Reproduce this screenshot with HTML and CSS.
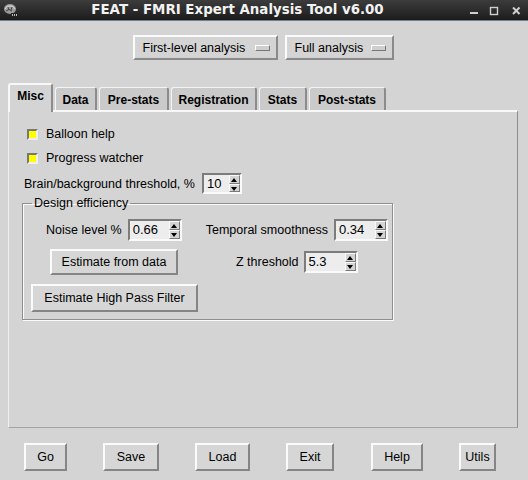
FILE: index.html
```html
<!DOCTYPE html>
<html>
<head>
<meta charset="utf-8">
<link rel="stylesheet" href="styles.css">
</head>
<body>
<div class="window">
  <div class="titlebar">
    <div class="appicon">
      <svg width="14" height="14" viewBox="0 0 14 14">
        <ellipse cx="7" cy="6" rx="6" ry="5" fill="#9a9a9a"/>
        <path d="M2 6 Q4 2 7 3 Q10 2 12 6" fill="none" stroke="#e0e0e0" stroke-width="1"/>
        <path d="M3 8 Q6 5 9 8 M5 4 L6 7 M9 4 L8 7" fill="none" stroke="#444" stroke-width="1"/>
        <rect x="8" y="10" width="6" height="4" fill="#222"/>
        <rect x="9" y="11" width="1" height="2" fill="#bbb"/>
        <rect x="11" y="11" width="1" height="2" fill="#bbb"/>
        <rect x="13" y="11" width="1" height="2" fill="#bbb"/>
      </svg>
    </div>
    <div class="title">FEAT - FMRI Expert Analysis Tool v6.00</div>
    <div class="wctl">
      <svg width="58" height="20" viewBox="0 0 58 20">
        <rect x="2" y="12" width="8" height="2" fill="#cfcfcf"/>
        <rect x="22.5" y="7.5" width="7" height="7" fill="none" stroke="#cfcfcf" stroke-width="1.4"/>
        <path d="M45 7.5 L51.5 14 M51.5 7.5 L45 14" stroke="#cfcfcf" stroke-width="2"/>
      </svg>
    </div>
  </div>
  <div class="content">
    <div class="modes">
      <div class="menubtn mb-first"><span>First-level analysis</span><i class="ind"></i></div>
      <div class="menubtn mb-full"><span>Full analysis</span><i class="ind"></i></div>
    </div>
    <div class="tabs">
      <div class="tab sel t-misc">Misc</div>
      <div class="tab t-data">Data</div>
      <div class="tab t-pre">Pre-stats</div>
      <div class="tab t-reg">Registration</div>
      <div class="tab t-stats">Stats</div>
      <div class="tab t-post">Post-stats</div>
    </div>
    <div class="pane">
      <div class="chkrow r1"><span class="chk"></span><span>Balloon help</span></div>
      <div class="chkrow r2"><span class="chk"></span><span>Progress watcher</span></div>
      <div class="thrrow">
        <span>Brain/background threshold, %</span>
        <div class="spin sp-small"><span class="val">10</span><span class="arrows"><i class="up"></i><i class="dn"></i></span></div>
      </div>
      <fieldset class="design">
        <legend>Design efficiency</legend>
        <div class="drow d1">
          <span>Noise level %</span>
          <div class="spin"><span class="val">0.66</span><span class="arrows"><i class="up"></i><i class="dn"></i></span></div>
          <span class="tlabel">Temporal smoothness</span>
          <div class="spin"><span class="val">0.34</span><span class="arrows"><i class="up"></i><i class="dn"></i></span></div>
        </div>
        <div class="drow d2">
          <div class="btn b-est">Estimate from data</div>
          <span class="zlabel">Z threshold</span>
          <div class="spin"><span class="val">5.3</span><span class="arrows"><i class="up"></i><i class="dn"></i></span></div>
        </div>
        <div class="drow d3">
          <div class="btn b-hpf">Estimate High Pass Filter</div>
        </div>
      </fieldset>
    </div>
    <div class="actions">
      <div class="btn ab a-go">Go</div>
      <div class="btn ab a-save">Save</div>
      <div class="btn ab a-load">Load</div>
      <div class="btn ab a-exit">Exit</div>
      <div class="btn ab a-help">Help</div>
      <div class="btn ab a-utils">Utils</div>
    </div>
  </div>
</div>
</body>
</html>
```
FILE: styles.css
```css
* { box-sizing: border-box; }
html, body { margin: 0; padding: 0; }
body {
  width: 528px;
  height: 480px;
  overflow: hidden;
  background: #d4d4d4;
  font-family: "Liberation Sans", Arial, sans-serif;
  font-size: 12.5px;
  color: #000;
}
.window { width: 528px; height: 480px; display: flex; flex-direction: column; }

.titlebar {
  height: 21px;
  flex: none;
  display: flex;
  align-items: center;
  background: linear-gradient(#3c3c3c, #1c1c1c);
  border-bottom: 1px solid #6f7f90;
}
.appicon { width: 14px; height: 14px; margin-left: 3px; margin-top: -1px; display: flex; }
.title {
  flex: 1;
  text-align: center;
  color: #f2f2f2;
  font-family: "DejaVu Sans", sans-serif;
  font-weight: bold;
  font-size: 13.4px;
  padding-right: 10px;
  margin-top: -2px;
  white-space: nowrap;
}
.wctl { width: 60px; height: 20px; display: flex; margin-top: -1px; }

.content { flex: 1; display: flex; flex-direction: column; }

.modes { display: flex; justify-content: center; gap: 7px; margin-top: 14px; height: 25px; padding-right: 2px; }
.menubtn {
  height: 25px;
  display: flex;
  align-items: center;
  justify-content: space-between;
  padding: 0 6px 0 8px;
  border: 2px solid;
  border-color: #fbfbfb #8a8a8a #8a8a8a #fbfbfb;
  background: #d4d4d4;
}
.mb-first { width: 145px; }
.mb-full { width: 109px; }
.ind {
  display: block;
  width: 15px;
  height: 6px;
  border: 1px solid;
  border-color: #fff #777 #777 #fff;
  background: #cfcfcf;
}

.tabs {
  display: flex;
  align-items: flex-end;
  gap: 2px;
  margin-top: 23px;
  margin-left: 8px;
  height: 27px;
  font-size: 12px;
}
.tab {
  height: 23px;
  font-weight: bold;
  display: flex;
  align-items: center;
  justify-content: center;
  background: #cacaca;
  border-top: 1px solid #f4f4f4;
  border-left: 1px solid #f4f4f4;
  border-right: 2px solid #8c8c8c;
  border-radius: 3px 3px 0 0;
  padding-top: 1px;
}
.tab.sel {
  height: 29px;
  margin-bottom: -2px;
  background: #d4d4d4;
  border-top: 2px solid #f8f8f8;
  border-left: 2px solid #f8f8f8;
  position: relative;
  z-index: 1;
  align-items: flex-start;
  padding-top: 4px;
}
.t-misc { width: 45px; }
.t-data { width: 42px; }
.t-pre { width: 70px; }
.t-reg { width: 86px; }
.t-stats { width: 48px; }
.t-post { width: 77px; }

.pane {
  margin-left: 8px;
  width: 510px;
  height: 318px;
  border-top: 2px solid #f8f8f8;
  border-left: 1px solid #f0f0f0;
  border-right: 1px solid #8c8c8c;
  border-bottom: 1px solid #a4a4a4;
  padding-top: 14px;
}
.chkrow { display: flex; align-items: center; height: 16px; padding-left: 18px; }
.chkrow.r2 { margin-top: 8px; }
.chk {
  width: 11px;
  height: 11px;
  margin-right: 8px;
  background: #ffff00;
  border: 2px solid;
  border-color: #777 #eee #eee #777;
}
.thrrow { display: flex; align-items: center; padding-left: 15px; margin-top: 7px; height: 21px; }
.thrrow > span { margin-right: 7px; }

.spin {
  width: 54px;
  height: 22px;
  display: flex;
  border: 2px solid;
  border-color: #7c7c7c #fafafa #fafafa #7c7c7c;
  background: #ededed;
}
.sp-small { width: 40px; height: 21px; }
.spin .val { flex: 1; padding-left: 3px; line-height: 17px; font-size: 13px; }
.arrows { width: 11px; display: flex; flex-direction: column; background: #d4d4d4; }
.arrows i {
  flex: 1;
  display: block;
  position: relative;
  border: 1px solid;
  border-color: #fafafa #7a7a7a #7a7a7a #fafafa;
}
.arrows i::after {
  content: "";
  position: absolute;
  left: 1px;
  border-left: 3.5px solid transparent;
  border-right: 3.5px solid transparent;
}
.arrows .up::after { top: 2px; border-bottom: 4px solid #000; }
.arrows .dn::after { top: 2px; border-top: 4px solid #000; }

.design {
  margin: 2px 0 0 13px;
  width: 371px;
  padding: 9px 0 7px 0;
  border: 1px solid #8e8e8e;
  box-shadow: inset 1px 1px 0 #fafafa, 1px 1px 0 #fafafa;
  min-width: 0;
}
.design legend {
  margin-left: 9px;
  padding: 0 2px;
  line-height: 14px;
}
.drow { display: flex; align-items: center; }
.d1 { height: 22px; padding-left: 23px; }
.d1 .spin { margin-left: 6px; }
.d1 .tlabel { margin-left: 24px; }
.d2 { height: 26px; margin-top: 8px; padding-left: 27px; }
.d2 .zlabel { margin-left: 58px; margin-right: 5px; }
.d3 { height: 28px; margin-top: 9px; padding-left: 8px; }

.btn {
  display: flex;
  align-items: center;
  justify-content: center;
  border: 2px solid;
  border-color: #fbfbfb #858585 #858585 #fbfbfb;
  background: #d6d6d6;
}
.b-est { width: 128px; height: 26px; }
.b-hpf { width: 167px; height: 28px; }

.actions {
  display: flex;
  gap: 36px;
  padding-left: 24px;
  margin-top: 15px;
}
.ab { height: 28px; }
.a-go { width: 43px; }
.a-save { width: 56px; }
.a-load { width: 55px; }
.a-exit { width: 48px; }
.a-help { width: 52px; margin-left: 1px; }
.a-utils { width: 37px; }
```
